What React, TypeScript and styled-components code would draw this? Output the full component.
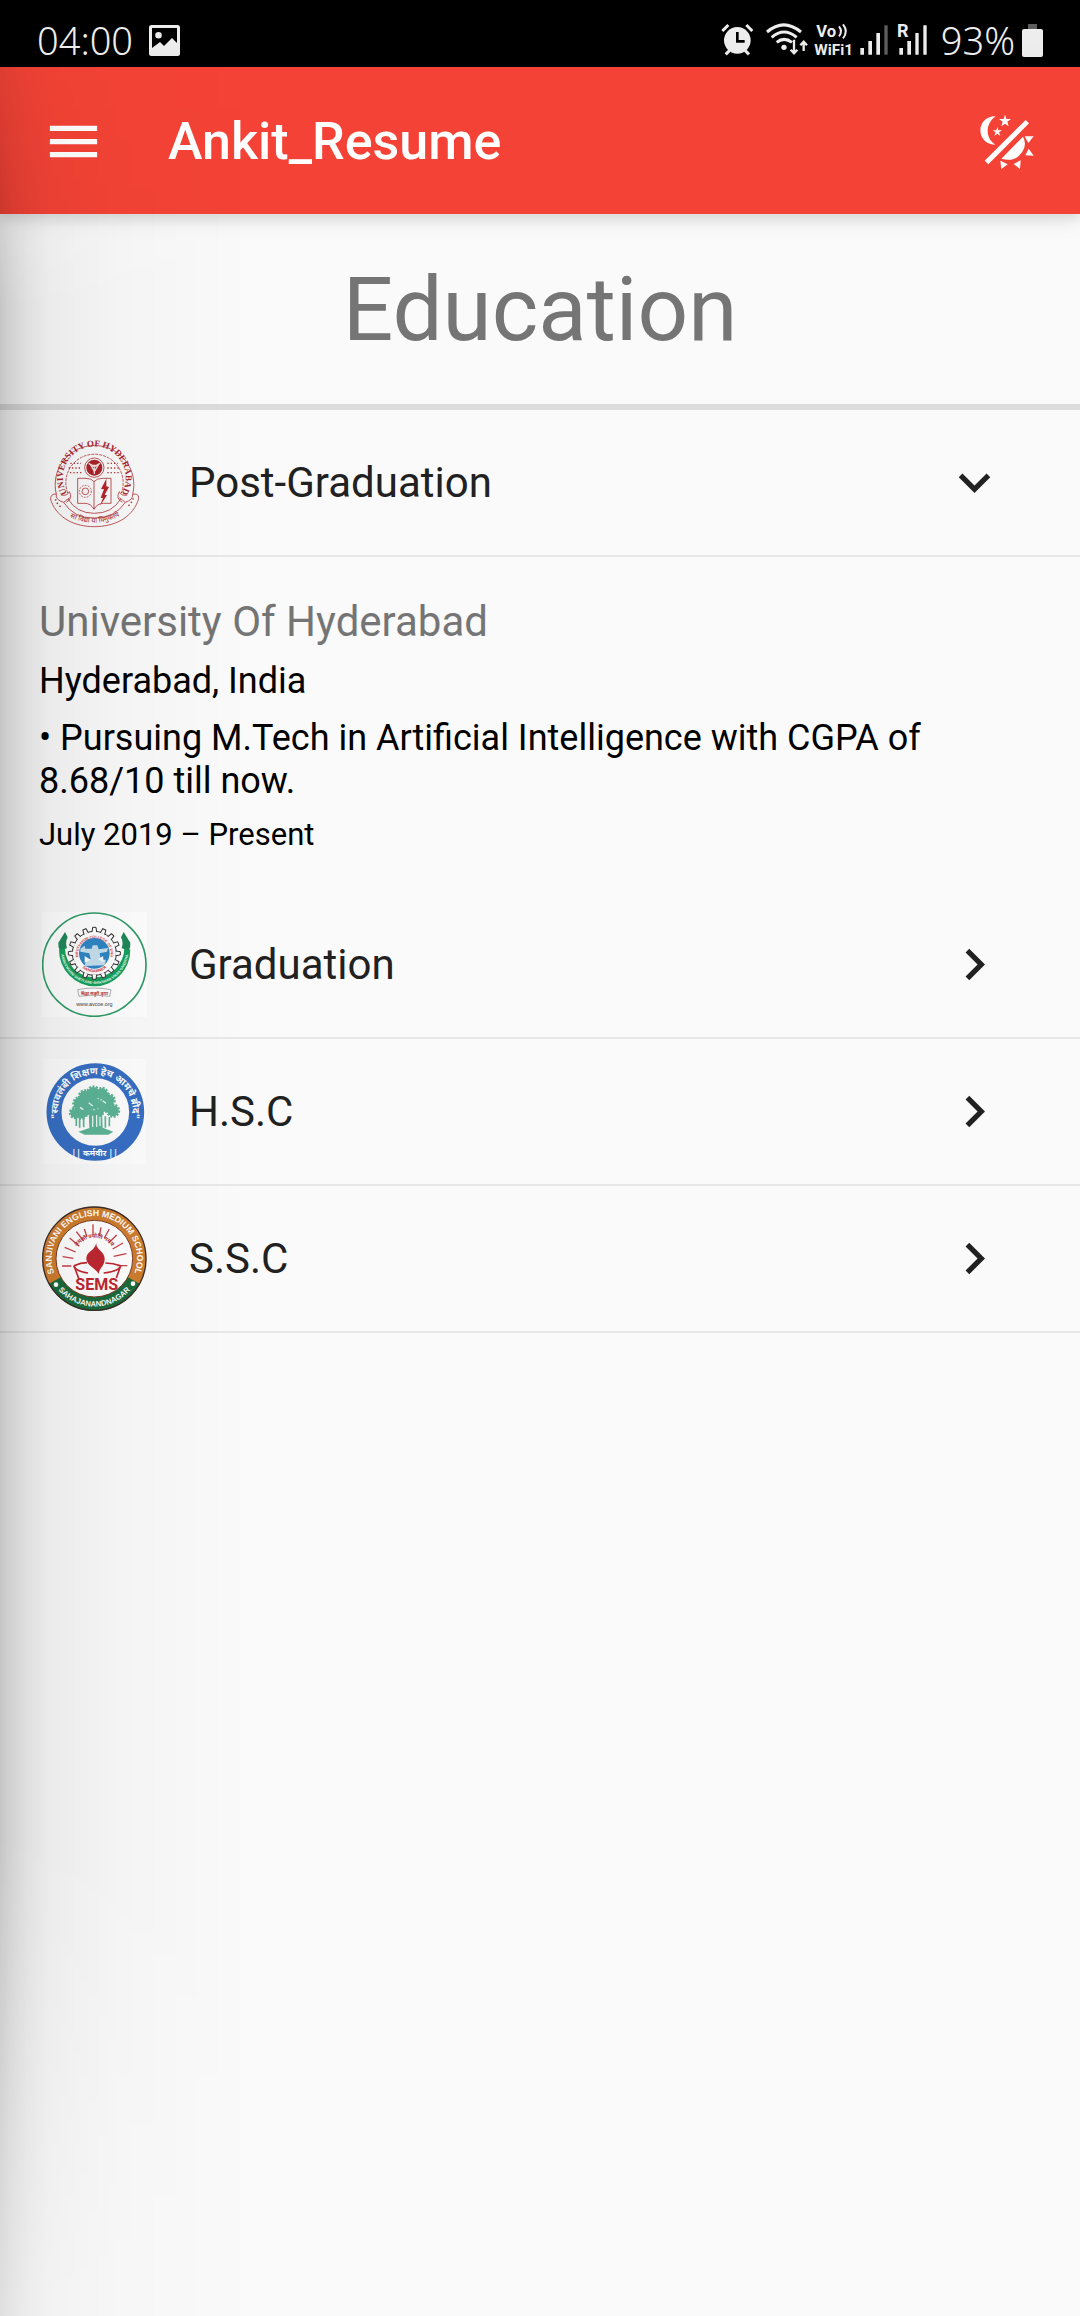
import React, { useState } from "react";
import styled, { createGlobalStyle } from "styled-components";

const GlobalStyle = createGlobalStyle`
  * { box-sizing: border-box; }
  body {
    margin: 0;
    background: #fafafa;
    font-family: Roboto, "Noto Sans", sans-serif;
  }
`;

const Screen = styled.div`
  position: relative;
  min-height: 100vh;
  background: #fafafa;
`;

const StatusBar = styled.div`
  display: flex;
  align-items: center;
  justify-content: space-between;
  height: 67px;
  padding: 13px 37px 0 37px;
  background: #000;
  color: #ededed;
  font-family: "Noto Sans", sans-serif;
  font-size: 38px;
  line-height: 54px;
`;

const StatusGroup = styled.div<{ $gap: number }>`
  display: flex;
  align-items: center;
  gap: ${(p) => p.$gap}px;
`;

const StatusValue = styled.span`
  font-weight: 300;
`;

const AppBar = styled.header`
  position: relative;
  display: flex;
  align-items: center;
  height: 147px;
  padding: 2px 44px 0 42px;
  background: #f44336;
  color: #fff;
  box-shadow: 0 5px 12px rgba(0, 0, 0, 0.1), 0 2px 28px rgba(0, 0, 0, 0.08);
`;

const IconButton = styled.button`
  display: flex;
  padding: 0;
  border: 0;
  background: none;
  color: inherit;
  cursor: pointer;
`;

const AppTitle = styled.h1`
  flex: 1;
  margin: 0 0 0 63px;
  font-size: 52px;
  font-weight: 500;
  line-height: 61px;
`;

const PageHeading = styled.h2`
  margin: 0;
  padding: 44px 0 42px;
  border-bottom: 6px solid #dcdcdc;
  color: #757575;
  font-size: 89px;
  font-weight: 400;
  line-height: 104px;
  text-align: center;
`;

const RowButton = styled.button`
  display: flex;
  align-items: center;
  gap: 42px;
  width: 100%;
  height: 147px;
  padding: 0 74px 0 42px;
  border: 0;
  border-bottom: 2px solid #e8e8e8;
  background: none;
  color: #212121;
  font-family: inherit;
  font-size: 42px;
  line-height: 49px;
  text-align: left;
  cursor: pointer;
`;

const RowTitle = styled.span`
  flex: 1;
`;

const Details = styled.div`
  display: flex;
  flex-direction: column;
  gap: 14px;
  padding: 40px 39px;
  color: #000;
`;

const School = styled.h3`
  margin: 0;
  color: #757575;
  font-size: 42px;
  font-weight: 400;
  line-height: 49px;
`;

const DetailText = styled.p<{ $small?: boolean }>`
  margin: 0;
  font-size: ${(p) => (p.$small ? 31 : 36)}px;
  line-height: ${(p) => (p.$small ? 35 : 43)}px;
`;

const DrawerShadow = styled.div`
  position: absolute;
  top: 67px;
  bottom: 0;
  left: 0;
  width: 250px;
  pointer-events: none;
  background: linear-gradient(
    to right,
    rgba(0, 0, 0, 0.21) 0,
    rgba(0, 0, 0, 0.16) 10px,
    rgba(0, 0, 0, 0.1) 28px,
    rgba(0, 0, 0, 0.06) 50px,
    rgba(0, 0, 0, 0.04) 85px,
    rgba(0, 0, 0, 0.024) 120px,
    rgba(0, 0, 0, 0.016) 165px,
    rgba(0, 0, 0, 0) 250px
  );
  mask-image: linear-gradient(
    to bottom,
    rgba(0, 0, 0, 0.4) 0,
    #000 240px,
    #000 calc(100% - 480px),
    rgba(0, 0, 0, 0.5) 100%
  );
`;

const PictureIcon = () => (
  <svg width="31" height="31" viewBox="0 0 31 31" aria-hidden="true">
    <path
      fill="#ededed"
      fillRule="evenodd"
      d="M2.5 0h26A2.5 2.5 0 0 1 31 2.500v26a2.500 2.500 0 0 1-2.500 2.500h-26A2.500 2.500 0 0 1 0 28.500v-26A2.500 2.500 0 0 1 2.500 0zM3 3v20l8-6 4 4 8-8 5 5V3zM9.500 7a3.300 3.300 0 1 1 0 6.600 3.300 3.300 0 0 1 0-6.600z"
    />
  </svg>
);

/* Alarm, Wi-Fi, calling, both signal meters */
const StatusIcons = () => (
  <svg width="206" height="34" viewBox="0 0 618 102" overflow="visible" fill="#ededed" aria-hidden="true">
    <circle cx="49" cy="52" r="40" />
    <path d="M49 27v28h22" fill="none" stroke="#000" strokeWidth="8" />
    <path d="M4 24 22 6M94 24 76 6M26 82l-12 12M72 82l12 12" stroke="#ededed" strokeWidth="9" />
    <g fill="none" stroke="#ededed" strokeWidth="9">
      <path d="M138 27q50-43 102 0M152 43q37-32 75 0M167 58q22-18 46 0" />
    </g>
    <circle cx="189" cy="73" r="8" />
    <path d="M219 50v40M209 80l10 11 10-11M248 84V58M238 67l10-11 10 11" fill="none" stroke="#ededed" strokeWidth="7" />
    <text x="286" y="42" fontFamily="Roboto, sans-serif" fontWeight="700" fontSize="50">Vo</text>
    <path d="M354 10q12 15 0 30M366 4q17 21 0 42" fill="none" stroke="#ededed" strokeWidth="6" />
    <text x="280" y="95" fontFamily="Roboto, sans-serif" fontWeight="700" fontSize="46">WiFi1</text>
    <path d="M418 75h11v20h-11zM442 54h11v41h-11zM466 30h11v65h-11z" />
    <path d="M490 7h10v88h-10z" fill="#5d5d5d" />
    <text x="528" y="41" fontFamily="Roboto, sans-serif" fontWeight="700" fontSize="54">R</text>
    <path d="M535 75h11v20h-11zM559 54h11v41h-11zM583 30h10v65h-10zM607 7h10v88h-10z" />
  </svg>
);

const BatteryIcon = () => (
  <svg width="21" height="33" viewBox="0 0 21 33" aria-hidden="true">
    <path d="M6 0h9v5H6z" fill="#5d5d5d" />
    <rect y="5" width="21" height="28" rx="2" fill="#ededed" />
  </svg>
);

const MenuIcon = () => (
  <svg width="63" height="63" viewBox="0 0 24 24" fill="currentColor" aria-hidden="true">
    <path d="M3 18h18v-2H3v2zm0-5h18v-2H3v2zm0-7v2h18V6H3z" />
  </svg>
);

const DayNightIcon = () => (
  <svg width="56" height="56" viewBox="120 69 168 168" fill="currentColor" aria-hidden="true">
    <path d="M167 76C139 75 121 95 121 118C121 143 141 162 166 161C136 142 135 98 167 76z" />
    <path d="m195 71 4 13 14 0-11 8 4 14-11-8-11 8 4-14-11-8h14zM172 108l3 10h11l-9 6 4 11-9-7-9 7 4-11-9-6h11z" />
    <path d="m257 87 10 10-122 123-11-11z" />
    <path d="M249 137q13 24-3 47-21 31-62 19z" />
    <path d="m254 136 27 0-16 20zM266 173l15 21-25-1zM181 209l3 25 19-14zM221 219l21-11-2 26z" />
  </svg>
);

const Chevron = ({ open }: { open: boolean }) => (
  <svg width="63" height="63" viewBox="0 0 24 24" fill="currentColor" aria-hidden="true">
    <path
      d={
        open
          ? "M7.410 8.590 12 13.170l4.590-4.580L18 10l-6 6-6-6 1.410-1.410z"
          : "M8.590 16.590 13.170 12 8.590 7.410 10 6l6 6-6 6-1.410-1.410z"
      }
    />
  </svg>
);

const HyderabadLogo = () => (
  <svg width="105" height="105" viewBox="36 33 315 315" aria-hidden="true">
    <defs>
      <path id="uoh-top" d="M114 227A94 94 0 1 1 272 227" />
      <path id="uoh-bottom" d="M90 278Q193 346 298 274" />
    </defs>
    <g fill="none" stroke="#b4373b" strokeWidth="2.500">
      <path d="M79 226A118 118 0 1 1 308 226" />
      <path d="M113 222A86 86 0 1 1 274 222" strokeDasharray="9 3" />
      <path d="M79 226c-16-4-20 12-15 22 20 50 70 75 129 75s110-25 130-75c6-14 3-26-15-22" />
      <path d="M79 226q-4 16 22 24l18-14M308 226q2 16-22 24l-18-14M101 250q30 48 92 47 62 0 93-47M114 240q26 43 79 43t79-43" />
      <path d="M143 178h25q17 0 24 10 8-10 25-10h26v75h-22q-20 0-29 18-9-18-28-18h-21zM192 188v82" />
      <circle cx="193" cy="146" r="29" />
      <circle cx="166" cy="217" r="10" />
      <circle cx="166" cy="217" r="18" strokeDasharray="5 4" />
      <path d="M121 133h32M116 147h38M120 161h34M232 133h32M232 147h38M232 161h34" strokeDasharray="4 6" strokeWidth="4" />
      <path d="M94 228q18 4 24-10 12 20-9 32M292 228q-18 4-24-10-12 20 9 32" />
    </g>
    <circle cx="193" cy="146" r="24" fill="#ac2229" />
    <path d="m176 133 17 10 17-10M193 143v22M183 139h21l-11 19z" stroke="#f4dede" strokeWidth="4" fill="none" />
    <path d="m229 179-16 31 9 1-10 25 7 1-9 23 21-31-7-2 13-23-8-2z" fill="#b4262c" />
    <g fill="#a8252b">
      <circle cx="77" cy="243" r="2.500" />
      <circle cx="82" cy="253" r="2.500" />
      <circle cx="90" cy="262" r="2.500" />
      <circle cx="309" cy="240" r="2.500" />
      <circle cx="304" cy="250" r="2.500" />
      <circle cx="297" cy="259" r="2.500" />
    </g>
    <text fill="#a8252b" fontFamily="Liberation Serif, serif" fontSize="27" fontWeight="700" textAnchor="middle">
      <textPath href="#uoh-top" startOffset="50%">UNIVERSITY OF HYDERABAD</textPath>
    </text>
    <text fill="#a8252b" fontFamily="Noto Sans, Noto Sans Devanagari, sans-serif" fontSize="21" fontWeight="400" textAnchor="middle">
      <textPath href="#uoh-bottom" startOffset="50%">सा विद्या या विमुक्तये</textPath>
    </text>
  </svg>
);

const gearTeeth = Array.from({ length: 16 }, (_, i) => i * 22.5);

const CollegeLogo = () => (
  <svg width="105" height="105" viewBox="36 35 315 315" aria-hidden="true">
    <defs>
      <path id="av-top" d="M145 172A49 49 0 1 1 241 172" />
      <path id="av-mid" d="M150 196A57 57 0 0 0 236 196" />
      <path id="av-band" d="M93 150A101 101 0 0 0 295 150" />
    </defs>
    <rect x="36" y="35" width="315" height="315" fill="#fefefe" />
    <circle cx="193" cy="193" r="155" fill="none" stroke="#2f9b68" strokeWidth="5" />
    <path d="M87 148l18-6a88 88 0 0 0 178 0l18 6a107 110 0 0 1-214 0z" fill="#17a05d" />
    <path d="m105 95-20 32q-1 12 4 22l22-5q-6-18 2-33zM281 95l20 32q1 12-4 22l-22-5q6-18-2-33z" fill="#21875a" />
    <g fill="#fff" stroke="#333" strokeWidth="3">
      <circle cx="193" cy="159" r="66" />
      {gearTeeth.map((a) => (
        <path key={a} d="M186 95l2-14h10l2 14" transform={`rotate(${a} 193 159)`} />
      ))}
    </g>
    <circle cx="193" cy="159" r="46" fill="#2f86c4" />
    <path d="M151 145l13-9 2 9h19l3-10h14l4 12 28-4-3 11-22 5 3 19h16l-4 17-60 2 4-17 14-3-4-18-27-5z" fill="#c6dfee" />
    <path d="M164 167l18 11-18 9zM219 167l-15 10 17 9z" fill="#f6fbff" />
    <text fill="#d0444d" fontFamily="Liberation Sans, sans-serif" fontSize="11" fontWeight="700" textAnchor="middle">
      <textPath href="#av-top" startOffset="50%">AMRUTVAHINI COLLEGE OF ENGG</textPath>
    </text>
    <text fill="#d0343d" fontFamily="Liberation Sans, sans-serif" fontSize="12" fontWeight="700" textAnchor="middle">
      <textPath href="#av-mid" startOffset="50%">SANGAMNER</textPath>
    </text>
    <text fill="#e6fff1" fontFamily="Liberation Sans, sans-serif" fontSize="11" fontWeight="700" textAnchor="middle">
      <textPath href="#av-band" startOffset="50%">AMRUTVAHINI SHETI AND SHIKSHAN VIKAS SANSTHA</textPath>
    </text>
    <path d="M143 268q50-10 100 0l-4 20q-46-8-92 0z" fill="#fff" stroke="#8b8b8b" strokeWidth="2" />
    <text x="193" y="283" fill="#ba3a41" fontFamily="Noto Sans, Noto Sans Devanagari, sans-serif" fontSize="13" fontWeight="700" textAnchor="middle">श्रद्धा सबुरी कृपा</text>
    <text x="193" y="318" fill="#444" fontFamily="Liberation Sans, sans-serif" fontSize="16" textAnchor="middle">www.avcoe.org</text>
  </svg>
);

const leaves = [
  [150, 160, 22], [135, 188, 17], [165, 138, 20], [190, 127, 20], [216, 130, 19],
  [236, 150, 20], [249, 181, 20], [222, 166, 21], [187, 157, 23], [170, 180, 17], [205, 188, 15], [155, 193, 14],
];

const HscLogo = () => (
  <svg width="105" height="105" viewBox="36 26 315 315" aria-hidden="true">
    <defs>
      <path id="hsc-top" d="M91 223A112 112 0 1 1 301 223" />
    </defs>
    <rect x="40" y="26" width="307" height="315" fill="#fdfdfd" />
    <circle cx="196" cy="185" r="124" fill="none" stroke="#386fc4" strokeWidth="45" />
    <g fill="#5db497">
      {leaves.map(([x, y, r]) => (
        <g key={`${x}-${y}`}>
          <circle cx={x} cy={y} r={r - 3} />
          <circle cx={x} cy={y} r={r - 2} fill="none" stroke="#5db497" strokeWidth="7" strokeDasharray="6 4" />
        </g>
      ))}
      <path d="M176 180h40l2 52 32 12-15 9H164l-19-9 33-11z" />
    </g>
    <path d="M139 199v28M149 202v30M161 200v31M226 198v34M238 200v28" stroke="#5db497" strokeWidth="5" />
    <path d="M188 196v34M200 194v36M210 199v28M176 157l12 10M218 151l10 8M150 171l10 7" stroke="#e6f5ef" strokeWidth="4" />
    <text fill="#fff" fontFamily="Noto Sans, Noto Sans Devanagari, sans-serif" fontSize="29" fontWeight="700" textAnchor="middle">
      <textPath href="#hsc-top" startOffset="50%">"स्वावलंबी शिक्षण हेच आमचे ब्रीद"</textPath>
    </text>
    <text x="194" y="316" fill="#fff" fontFamily="Noto Sans, Noto Sans Devanagari, sans-serif" fontSize="25" fontWeight="700" textAnchor="middle">|| कर्मवीर ||</text>
  </svg>
);

const SscLogo = () => (
  <svg width="105" height="105" viewBox="36 32 315 315" aria-hidden="true">
    <defs>
      <path id="ssc-top" d="M80 250A128 128 0 1 1 306 250" />
      <path id="ssc-bottom" d="M68 260A143 143 0 0 0 318 260" />
      <path id="ssc-motto" d="M132 168A66 66 0 0 1 254 168" />
    </defs>
    <circle cx="193" cy="190" r="156" fill="#cf7d2e" />
    <path d="M56 266A156 156 0 0 0 330 266L193 190z" fill="#1c6b3c" />
    <circle cx="193" cy="190" r="155" fill="none" stroke="#3d2f2b" strokeWidth="4" />
    <circle cx="193" cy="190" r="115" fill="#fff" stroke="#7c3c24" strokeWidth="3" />
    <g stroke="#c8414a" strokeWidth="4" fill="none">
      <path d="M96 212h28M98 184l32 5M104 156l33 14M119 128l29 25M139 109l22 28M163 101l8 24M189 87v31M213 96l-5 26M238 101l-15 27M260 119l-24 24M279 143l-31 18M289 175l-38 8M292 211h-30" />
    </g>
    <path d="M199 140c-4 24 25 25 25 51 0 21-17 28-18 45-10-19-37-24-37-47 0-22 28-22 30-49z" fill="#bf2831" />
    <path d="M132 211q4 17 42 22M272 211q-4 17-51 22M132 211q20-9 39-9M226 203q23 0 46 8l-13 37" stroke="#bf2831" strokeWidth="5" fill="none" />
    <path d="m132 211 15 41" stroke="#bf2831" strokeWidth="5" />
    <text fill="#b2323a" fontFamily="Noto Sans, Noto Sans Devanagari, sans-serif" fontSize="17" fontWeight="700" textAnchor="middle">
      <textPath href="#ssc-motto" startOffset="50%">तमसो ज्योति गमय</textPath>
    </text>
    <text x="200" y="285" fill="#bf2831" fontFamily="Roboto, sans-serif" fontSize="48" fontWeight="700" textAnchor="middle">SEMS</text>
    <text fill="#fff" fontFamily="Liberation Sans, sans-serif" fontSize="26" fontWeight="700" textAnchor="middle">
      <textPath href="#ssc-top" startOffset="50%">SANJIVANI ENGLISH MEDIUM SCHOOL</textPath>
    </text>
    <text fill="#fff" fontFamily="Liberation Sans, sans-serif" fontSize="23" fontWeight="700" textAnchor="middle">
      <textPath href="#ssc-bottom" startOffset="50%">SAHAJANANDNAGAR</textPath>
    </text>
    <circle cx="78" cy="268" r="7" fill="#fff" />
    <circle cx="309" cy="265" r="7" fill="#fff" />
  </svg>
);

const stages = [
  { id: "pg", title: "Post-Graduation", Logo: HyderabadLogo },
  { id: "ug", title: "Graduation", Logo: CollegeLogo },
  { id: "hsc", title: "H.S.C", Logo: HscLogo },
  { id: "ssc", title: "S.S.C", Logo: SscLogo },
];

export default function App() {
  const [open, setOpen] = useState(true);

  return (
    <Screen>
      <GlobalStyle />
      <StatusBar>
        <StatusGroup $gap={16}>
          <StatusValue>04:00</StatusValue>
          <PictureIcon />
        </StatusGroup>
        <StatusGroup $gap={14}>
          <StatusIcons />
          <StatusGroup $gap={7}>
            <StatusValue>93%</StatusValue>
            <BatteryIcon />
          </StatusGroup>
        </StatusGroup>
      </StatusBar>
      <AppBar>
        <IconButton aria-label="Open menu">
          <MenuIcon />
        </IconButton>
        <AppTitle>Ankit_Resume</AppTitle>
        <IconButton aria-label="Switch theme">
          <DayNightIcon />
        </IconButton>
      </AppBar>
      <main>
        <PageHeading>Education</PageHeading>
        {stages.map(({ id, title, Logo }) => {
          const expanded = id === "pg" && open;
          return (
            <section key={id}>
              <RowButton
                aria-expanded={expanded}
                onClick={() => id === "pg" && setOpen(!open)}
              >
                <Logo />
                <RowTitle>{title}</RowTitle>
                <Chevron open={expanded} />
              </RowButton>
              {expanded && (
                <Details>
                  <School>University Of Hyderabad</School>
                  <DetailText>Hyderabad, India</DetailText>
                  <DetailText>• Pursuing M.Tech in Artificial Intelligence with CGPA of 8.68/10 till now.</DetailText>
                  <DetailText $small>July 2019 – Present</DetailText>
                </Details>
              )}
            </section>
          );
        })}
      </main>
      <DrawerShadow />
    </Screen>
  );
}
